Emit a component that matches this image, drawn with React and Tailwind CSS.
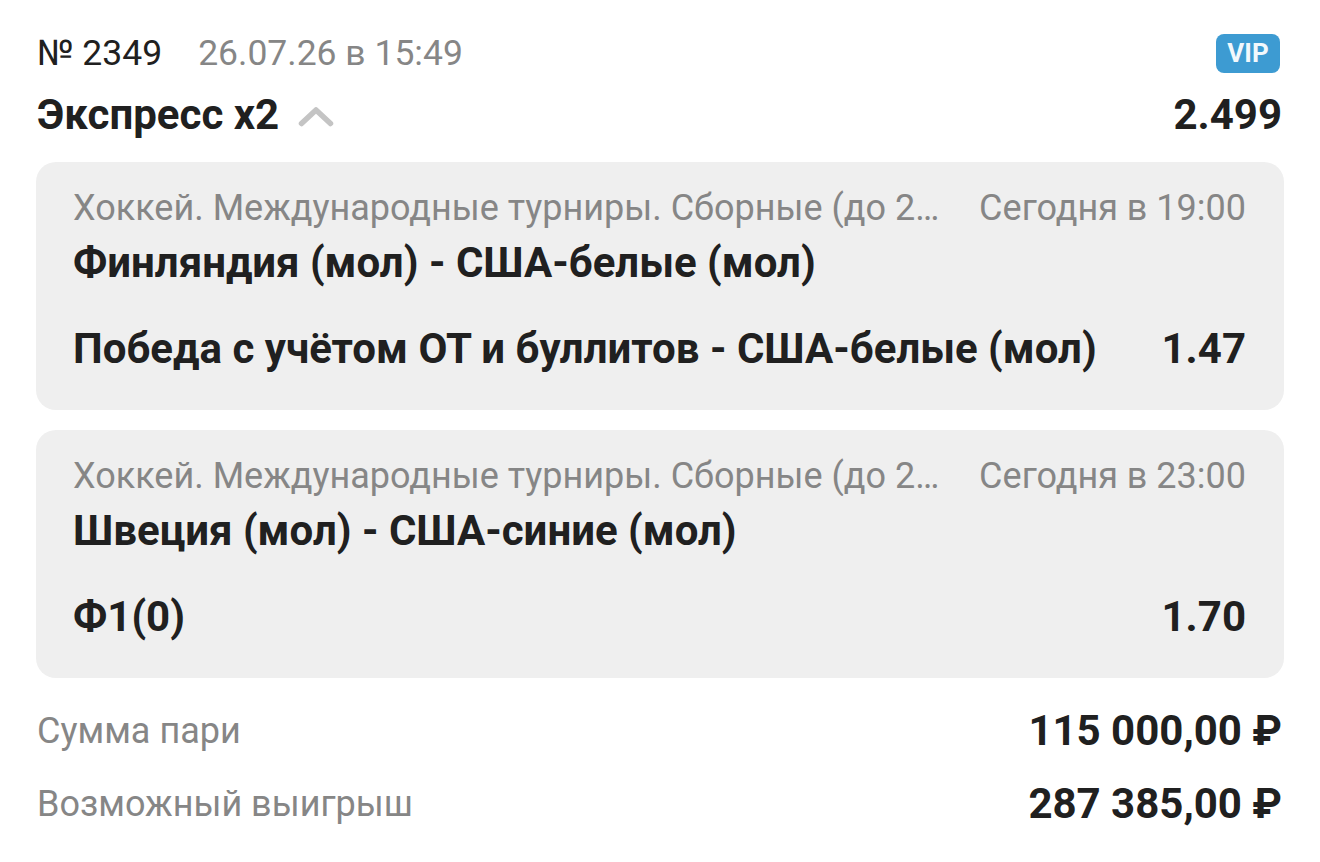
import React from "react";

function Card({ league, time, teams, bet, odd }) {
  return (
    <div className="rounded-[20px] bg-[#efefef] pl-[37px] pr-[38px] pt-[26px] pb-[41px]">
      <div className="flex items-center justify-between h-[40px] text-[36px] leading-[40px] text-[#868686] gap-[30px]">
        <div className="whitespace-nowrap overflow-hidden min-w-0">{league}</div>
        <div className="shrink-0">{time}</div>
      </div>
      <div className="mt-[15px] h-[40px] flex items-center text-[42px] leading-[40px] font-bold text-[#202020]">{teams}</div>
      <div className="mt-[46px] h-[40px] flex items-center justify-between text-[42px] leading-[40px] font-bold text-[#202020]">
        <div>{bet}</div>
        <div>{odd}</div>
      </div>
    </div>
  );
}

export default function App() {
  return (
    <div className="w-[1320px] h-[862px] bg-white overflow-hidden" style={{ fontFamily: "Roboto, 'Noto Sans', sans-serif" }}>
      <div className="pl-[37px] pr-[40px] pt-[33px]">
        <div className="flex items-center justify-between h-[40px]">
          <div className="flex items-center text-[35.5px] leading-[40px] text-[#202020]">
            <span>№ 2349</span>
            <span className="ml-[36px] text-[#868686]">26.07.26 в 15:49</span>
          </div>
          <div className="h-[39px] w-[64px] rounded-[8px] bg-[#3d9bd2] text-[#f2f8fc] font-bold text-[26px] leading-none flex items-center justify-center">VIP</div>
        </div>
        <div className="flex items-center justify-between h-[44px] mt-[20px] -mr-[2px]">
          <div className="flex items-center">
            <span className="text-[42px] leading-[44px] font-bold text-[#202020]">Экспресс x2</span>
            <svg className="ml-[19px] mt-[2px]" width="36" height="22" viewBox="0 0 36 22" fill="none">
              <path d="M3.5 18.5 L18 5 L32.5 18.5" stroke="#c4c4c4" strokeWidth="5.5" strokeLinecap="round" strokeLinejoin="round" />
            </svg>
          </div>
          <span className="text-[42px] leading-[44px] font-bold text-[#202020]">2.499</span>
        </div>
      </div>
      <div className="px-[36px] mt-[25px] flex flex-col gap-[20px]">
        <Card
          league="Хоккей. Международные турниры. Сборные (до 2…"
          time="Сегодня в 19:00"
          teams="Финляндия (мол) - США-белые (мол)"
          bet="Победа с учётом ОТ и буллитов - США-белые (мол)"
          odd="1.47"
        />
        <Card
          league="Хоккей. Международные турниры. Сборные (до 2…"
          time="Сегодня в 23:00"
          teams="Швеция (мол) - США-синие (мол)"
          bet="Ф1(0)"
          odd="1.70"
        />
      </div>
      <div className="pl-[37px] pr-[38px] mt-[33px]">
        <div className="flex items-center justify-between h-[40px]">
          <span className="text-[36px] leading-[40px] text-[#868686]">Сумма пари</span>
          <span className="text-[42px] leading-[40px] font-bold text-[#202020]">115 000,00 ₽</span>
        </div>
        <div className="flex items-center justify-between h-[40px] mt-[33px]">
          <span className="text-[36px] leading-[40px] text-[#868686]">Возможный выигрыш</span>
          <span className="text-[42px] leading-[40px] font-bold text-[#202020]">287 385,00 ₽</span>
        </div>
      </div>
    </div>
  );
}
